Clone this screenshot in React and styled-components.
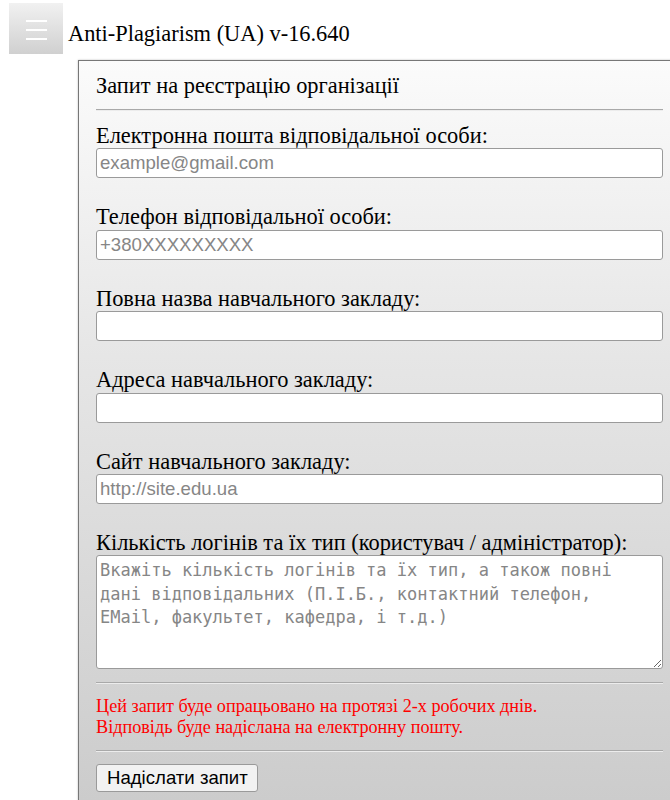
import { styled, createGlobalStyle } from "styled-components";

const GlobalStyle = createGlobalStyle`
    html, body {
        margin: 0;
        overflow: hidden;
        background: #ffffff;
    }
    body {
        padding: 3px 0 0 9px;
        font-family: "Liberation Serif", "DejaVu Serif", serif;
        font-size: 22.4px;
        color: #000;
    }
`;

const Header = styled.div`
    display: flex;
    align-items: center;
    gap: 5px;
    height: 51px;
`;

const MenuButton = styled.button`
    width: 54px;
    height: 51px;
    padding: 0;
    border: none;
    background: linear-gradient(#f1f1f1, #d0d0d0);
    display: flex;
    flex-direction: column;
    align-items: center;
    justify-content: center;
    gap: 7px;
    padding-top: 3px;
`;

const MenuLine = styled.span`
    display: block;
    width: 21px;
    height: 2px;
    background: #ffffff;
`;

const Title = styled.div`
    padding-top: 10px;
    line-height: 26px;
    white-space: nowrap;
`;

const Panel = styled.div`
    margin: 6px 0 0 69px;
    width: 567px;
    padding: 12px 17px 8px;
    border: 1px solid #777777;
    box-shadow: 0 0 2px rgba(0, 0, 0, 0.25);
    background: linear-gradient(#fbfbfb 0%, #e6e6e6 40%, #cccccc 100%);
`;

const Heading = styled.div`
    line-height: 26px;
`;

const Rule = styled.hr`
    margin: ${({ $top }) => $top}px 0 0;
    height: 0;
    border: none;
    border-top: 1px solid #a9a9a9;
    border-bottom: 1px solid #ececec;
`;

const Field = styled.div`
    margin-top: ${({ $first }) => ($first ? 12 : 26)}px;
`;

const Label = styled.label`
    display: block;
    line-height: 25.4px;
    white-space: nowrap;
`;

const TextInput = styled.input`
    display: block;
    box-sizing: border-box;
    width: 100%;
    height: 30px;
    margin: 0;
    padding: 1px 3px;
    border: 1px solid #9a9a9a;
    border-radius: 3px;
    background: #ffffff;
    font-family: "Liberation Sans", Arial, sans-serif;
    font-size: 18.6px;
    color: #000;

    &::placeholder {
        color: #868686;
    }
`;

const TextArea = styled.textarea`
    display: block;
    box-sizing: border-box;
    width: 100%;
    height: 114px;
    margin: 0;
    padding: 3px 3px;
    border: 1px solid #9a9a9a;
    border-radius: 3px;
    background: #ffffff;
    font-family: "DejaVu Sans Mono", "Liberation Mono", monospace;
    font-size: 17px;
    line-height: 23.5px;
    color: #000;
    resize: vertical;

    &::placeholder {
        color: #868686;
    }
`;

const Notice = styled.div`
    margin-top: 12px;
    color: #ff0000;
    font-size: 18.2px;
    line-height: 21px;
`;

const SubmitButton = styled.button`
    margin-top: 12px;
    height: 28px;
    padding: 0 9px 0 10px;
    border: 1px solid #9a9a9a;
    border-radius: 3px;
    background: #f2f2f2;
    font-family: "Liberation Sans", Arial, sans-serif;
    font-size: 18.6px;
    color: #000;
`;

const fields = [
    { label: "Електронна пошта відповідальної особи:", placeholder: "example@gmail.com", type: "email" },
    { label: "Телефон відповідальної особи:", placeholder: "+380XXXXXXXXX", type: "tel" },
    { label: "Повна назва навчального закладу:", placeholder: "", type: "text" },
    { label: "Адреса навчального закладу:", placeholder: "", type: "text" },
    { label: "Сайт навчального закладу:", placeholder: "http://site.edu.ua", type: "text" },
];

export default function App() {
    return (
        <>
            <GlobalStyle />
            <Header>
                <MenuButton type="button" aria-label="menu">
                    <MenuLine />
                    <MenuLine />
                    <MenuLine />
                </MenuButton>
                <Title>Anti-Plagiarism (UA) v-16.640</Title>
            </Header>

            <Panel>
                <Heading>Запит на реєстрацію організації</Heading>
                <Rule $top={10} />

                {fields.map((field, i) => (
                    <Field key={field.label} $first={i === 0}>
                        <Label>{field.label}</Label>
                        <TextInput type={field.type} placeholder={field.placeholder} />
                    </Field>
                ))}

                <Field>
                    <Label>Кількість логінів та їх тип (користувач / адміністратор):</Label>
                    <TextArea placeholder="Вкажіть кількість логінів та їх тип, а також повні дані відповідальних (П.І.Б., контактний телефон, EMail, факультет, кафедра, і т.д.)" />
                </Field>

                <Rule $top={13} />
                <Notice>
                    Цей запит буде опрацьовано на протязі 2-х робочих днів.
                    <br />
                    Відповідь буде надіслана на електронну пошту.
                </Notice>
                <Rule $top={12} />
                <SubmitButton type="button">Надіслати запит</SubmitButton>
            </Panel>
        </>
    );
}
